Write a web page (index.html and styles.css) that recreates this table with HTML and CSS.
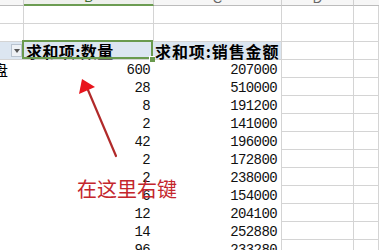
FILE: index.html
```html
<!DOCTYPE html>
<html lang="zh">
<head>
<meta charset="utf-8">
<link rel="stylesheet" href="styles.css">
</head>
<body>
<div class="sheet">
  <div class="colhead"></div>
  <div class="colhead sel">B</div>
  <div class="colhead">C</div>
  <div class="colhead">D</div>
  <div class="colhead last"></div>

  <div class="cell g"></div><div class="cell g"></div><div class="cell g"></div><div class="cell g"></div><div class="cell g"></div>
  <div class="cell g"></div><div class="cell g"></div><div class="cell g"></div><div class="cell g"></div><div class="cell g"></div>

  <div class="cell ph pa"><span class="dd"><span class="tri"></span></span></div>
  <div class="cell ph pb">求和项:数量<span class="handle"></span></div>
  <div class="cell ph pc">求和项:销售金额</div>
  <div class="cell g"></div><div class="cell g"></div>

  <div class="cell lab"><span class="clip">盘</span></div><div class="cell num">600</div><div class="cell num c">207000</div><div class="cell g"></div><div class="cell g"></div>
  <div class="cell"></div><div class="cell num">28</div><div class="cell num c">510000</div><div class="cell g"></div><div class="cell g"></div>
  <div class="cell"></div><div class="cell num">8</div><div class="cell num c">191200</div><div class="cell g"></div><div class="cell g"></div>
  <div class="cell"></div><div class="cell num">2</div><div class="cell num c">141000</div><div class="cell g"></div><div class="cell g"></div>
  <div class="cell"></div><div class="cell num">42</div><div class="cell num c">196000</div><div class="cell g"></div><div class="cell g"></div>
  <div class="cell"></div><div class="cell num">2</div><div class="cell num c">172800</div><div class="cell g"></div><div class="cell g"></div>
  <div class="cell"></div><div class="cell num">2</div><div class="cell num c">238000</div><div class="cell g"></div><div class="cell g"></div>
  <div class="cell"></div><div class="cell num">6</div><div class="cell num c">154000</div><div class="cell g"></div><div class="cell g"></div>
  <div class="cell"></div><div class="cell num">12</div><div class="cell num c">204100</div><div class="cell g"></div><div class="cell g"></div>
  <div class="cell"></div><div class="cell num">14</div><div class="cell num c">252880</div><div class="cell g"></div><div class="cell g"></div>
  <div class="cell"></div><div class="cell num">96</div><div class="cell num c">233280</div><div class="cell g"></div><div class="cell g"></div>
</div>

<svg class="arrow" width="379" height="250" viewBox="0 0 379 250">
  <line x1="88" y1="90" x2="116" y2="156" stroke="#b12a2a" stroke-width="2.2" stroke-linecap="round"/>
  <polygon points="82,79 79,94 95,87" fill="#e8141c"/>
</svg>
<div class="note">在这里右键</div>
</body>
</html>
```

FILE: styles.css
```css
html, body {
  margin: 0;
  padding: 0;
  background: #ffffff;
  overflow: hidden;
}
body {
  width: 379px;
  height: 250px;
  position: relative;
  font-family: "Noto Sans CJK SC", "Liberation Sans", sans-serif;
}
.sheet {
  display: grid;
  grid-template-columns: 24px 130px 128px 72px 25px;
  grid-template-rows: 6px repeat(14, 18px);
}
.colhead {
  box-sizing: border-box;
  background: #f6f6f6;
  border-right: 1px solid #d0d0d0;
  border-bottom: 1px solid #bcbcbc;
  overflow: hidden;
  display: flex;
  justify-content: center;
  align-items: flex-end;
  font-family: "Liberation Sans", sans-serif;
  font-size: 13px;
  line-height: 13px;
  color: #666;
}
.colhead.sel {
  border-bottom: 2px solid #6c9c52;
  color: #3f6f2f;
  background: #eef0ec;
}
.colhead.last { border-right: none; }
.cell {
  box-sizing: border-box;
  overflow: visible;
  position: relative;
}
.cell.g {
  border-right: 1px solid #d4d4d4;
  border-bottom: 1px solid #d4d4d4;
}
.ph {
  background: #dce6f1;
  font-weight: 700;
  font-size: 16px;
  color: #000;
  display: flex;
  align-items: center;
  white-space: nowrap;
  border-bottom: 1px solid #d4d4d4;
}
.pa { justify-content: flex-end; padding-right: 2px; }
.pb { padding-left: 2px; letter-spacing: 0.4px; }
.pc { padding-left: 1px; border-right: 1px solid #d4d4d4; letter-spacing: 0.9px; }
.pb::after {
  content: "";
  position: absolute;
  left: -2px;
  top: -2px;
  right: 1px;
  bottom: 0px;
  border: 2px solid #6a9a4e;
}
.handle {
  position: absolute;
  right: -1px;
  bottom: -3px;
  width: 5px;
  height: 5px;
  background: #6a9a4e;
  border-left: 1px solid #fff;
  border-top: 1px solid #fff;
  z-index: 2;
}
.dd {
  width: 11px;
  height: 13px;
  box-sizing: border-box;
  background: #eef1f5;
  border: 1px solid #b9c3cf;
  display: flex;
  align-items: center;
  justify-content: center;
}
.tri {
  width: 0;
  height: 0;
  border-left: 3px solid transparent;
  border-right: 3px solid transparent;
  border-top: 4px solid #555;
}
.num {
  font-family: "Liberation Mono", monospace;
  font-size: 14px;
  letter-spacing: -0.6px;
  color: #111;
  display: flex;
  align-items: flex-end;
  justify-content: flex-end;
  padding-right: 4px;
  line-height: 16px;
}
.num.c {
  border-right: 1px solid #d4d4d4;
}
.lab {
  overflow: hidden;
  font-size: 15px;
  line-height: 18px;
}
.clip {
  display: block;
  margin-left: -7px;
  margin-top: 1px;
}
.arrow {
  position: absolute;
  left: 0;
  top: 0;
  pointer-events: none;
}
.note {
  position: absolute;
  left: 77px;
  top: 175px;
  font-size: 20px;
  line-height: 28px;
  color: #c4262c;
  white-space: nowrap;
}
```
